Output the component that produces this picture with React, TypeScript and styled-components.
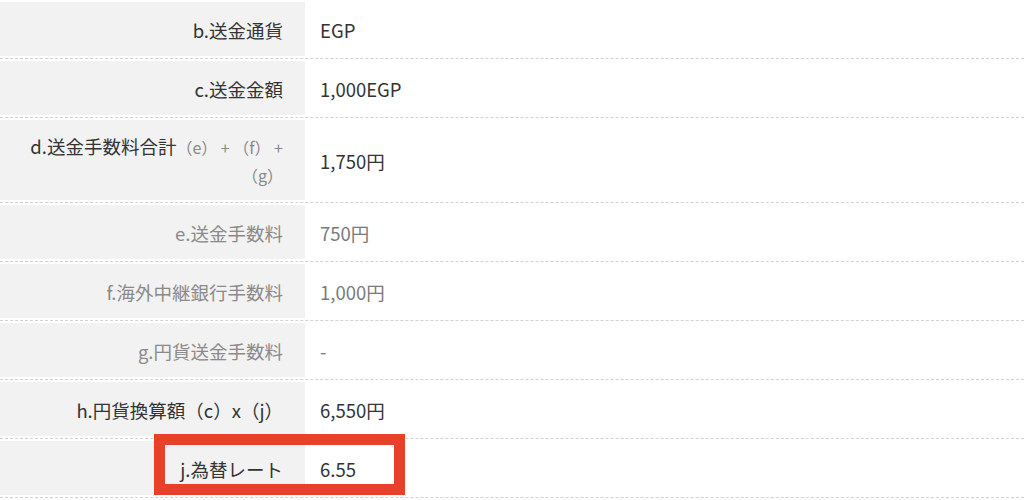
import styled, { createGlobalStyle } from 'styled-components';

const GlobalStyle = createGlobalStyle`
  html, body {
    margin: 0;
    padding: 0;
    background: #ffffff;
  }
  body {
    font-family: "Noto Sans CJK JP", "Noto Sans", sans-serif;
    color: #333333;
  }
`;

const Table = styled.div`
  position: relative;
  width: 1024px;
`;

const Row = styled.div<{ $tall?: boolean }>`
  display: grid;
  grid-template-columns: 305px 1fr;
  padding: 2px 0;
  border-bottom: 1px dashed #d2d2d2;
  height: ${({ $tall }) => ($tall ? '80px' : '54px')};
`;

const Label = styled.div<{ $sub?: boolean }>`
  background: #f2f2f2;
  display: flex;
  align-items: center;
  justify-content: flex-end;
  text-align: right;
  padding: 2px 22px 0 24px;
  font-size: 18.5px;
  line-height: 27px;
  color: ${({ $sub }) => ($sub ? '#8a8a8a' : '#333333')};
`;

const Value = styled.div<{ $sub?: boolean }>`
  display: flex;
  align-items: center;
  padding: 2px 0 0 15px;
  font-size: 18.5px;
  color: ${({ $sub }) => ($sub ? '#7a7a7a' : '#333333')};
`;

const Note = styled.span`
  font-size: 16px;
  color: #888888;
`;

const Highlight = styled.div`
  position: absolute;
  left: 154px;
  top: 434px;
  width: 251px;
  height: 61px;
  box-sizing: border-box;
  border: 11px solid #e8412a;
  pointer-events: none;
`;

type Item = { label: React.ReactNode; value: string; sub?: boolean; tall?: boolean };

const rows: Item[] = [
  { label: 'b.送金通貨', value: 'EGP' },
  { label: 'c.送金金額', value: '1,000EGP' },
  {
    label: (
      <span>
        d.送金手数料合計<Note>（e） + （f） + （g）</Note>
      </span>
    ),
    value: '1,750円',
    tall: true,
  },
  { label: 'e.送金手数料', value: '750円', sub: true },
  { label: 'f.海外中継銀行手数料', value: '1,000円', sub: true },
  { label: 'g.円貨送金手数料', value: '-', sub: true },
  { label: 'h.円貨換算額（c）x（j）', value: '6,550円' },
  { label: 'j.為替レート', value: '6.55' },
];

export default function App() {
  return (
    <>
      <GlobalStyle />
      <Table>
        {rows.map((r, i) => (
          <Row key={i} $tall={r.tall}>
            <Label $sub={r.sub}>{r.label}</Label>
            <Value $sub={r.sub}>{r.value}</Value>
          </Row>
        ))}
        <Highlight />
      </Table>
    </>
  );
}
